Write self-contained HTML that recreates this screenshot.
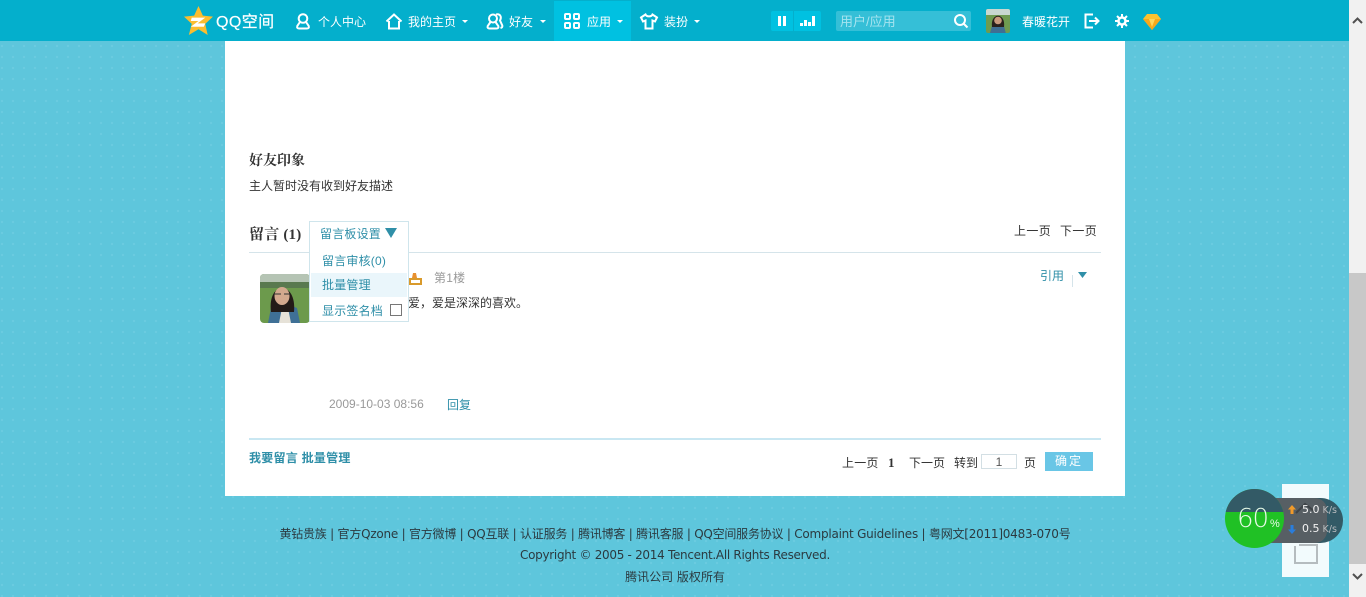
<!DOCTYPE html>
<html lang="zh"><head><meta charset="utf-8"><title>QQ空间</title>
<style>
html,body{margin:0;padding:0;width:1366px;height:597px;overflow:hidden}
body{position:relative;background-color:#5ec6dc;background-image:radial-gradient(circle at 2px 2px,#6bcbe0 1px,transparent 1.4px);background-size:11px 11px;font:12px "Liberation Sans","WenQuanYi Zen Hei","Noto Sans CJK SC",sans-serif;color:#333}
.a,.t{position:absolute;white-space:nowrap}
.t{line-height:16px}
.nav{color:#fff}
.b{color:#2f8fa8}
svg{position:absolute;overflow:visible}
.foot{left:225px;width:900px;text-align:center;color:#2b3a40;font-family:"DejaVu Sans","WenQuanYi Zen Hei","Noto Sans CJK SC",sans-serif;font-size:12px;letter-spacing:-.3px}
</style></head><body>
<!-- top bar -->
<div class="a" style="left:0;top:0;width:1349px;height:41px;background:#04afcc"></div>
<div class="a" style="left:554px;top:1px;width:77px;height:40px;background:#00c1e1"></div>
<!-- logo -->
<svg style="left:184px;top:6px" width="29" height="29" viewBox="0 0 30 30"><path d="M15 0l4.500 10 10.500 1-8 7.500L24.500 30 15 24l-10 6 3-11.500L0 11l10.500-1z" fill="#fbbd2f"/><path d="M8 12h14l-8 6h8l-1.500 3.500H7l8-6H7z" fill="#fff"/></svg>
<div class="t nav" style="left:216px;top:14px;font-size:16px;line-height:18px;letter-spacing:.4px;-webkit-text-stroke:.2px #fff">QQ空间</div>
<!-- nav icons -->
<svg style="left:295px;top:13px" width="16" height="17" fill="none" stroke="#fff" stroke-width="2"><circle cx="8" cy="5.500" r="4.300"/><path d="M5 9L2.300 13q-.8 2.500 2 2.500h7.400q2.800 0 2-2.500L11 9"/></svg>
<div class="t nav" style="left:318px;top:14px">个人中心</div>
<svg style="left:385px;top:13px" width="18" height="17" fill="none" stroke="#fff" stroke-width="2"><path d="M1.500 8.500L9 1.500l7.500 7M4 8v7.500h10V8"/></svg>
<div class="t nav" style="left:408px;top:14px">我的主页</div>
<svg style="left:461px;top:20px" width="8" height="4"><path d="M1 0h6L4 3z" fill="#fff"/></svg>
<svg style="left:486px;top:13px" width="18" height="17" fill="none" stroke="#fff" stroke-width="2"><circle cx="7" cy="5.500" r="4"/><path d="M4.500 9L1.700 13q-.7 2.500 2 2.500h6.600q2.700 0 2-2.500L9.500 9M10 1.500c4-1 6 2 4 6l2.300 5q.5 2-1.800 2.500"/></svg>
<div class="t nav" style="left:509px;top:14px">好友</div>
<svg style="left:539px;top:20px" width="8" height="4"><path d="M1 0h6L4 3z" fill="#fff"/></svg>
<svg style="left:564px;top:13px" width="16" height="16" fill="none" stroke="#fff" stroke-width="2"><rect x="1" y="1" width="5" height="5" rx="1"/><rect x="10" y="1" width="5" height="5" rx="1"/><rect x="1" y="10" width="5" height="5" rx="1"/><rect x="10" y="10" width="5" height="5" rx="1"/></svg>
<div class="t nav" style="left:587px;top:14px">应用</div>
<svg style="left:616px;top:20px" width="8" height="4"><path d="M1 0h6L4 3z" fill="#fff"/></svg>
<svg style="left:640px;top:13px" width="18" height="17" fill="none" stroke="#fff" stroke-width="2"><path d="M5.500 1.500L1 4.500l2 4 2.500-1V15.500h7V7.500l2.500 1 2-4-4.500-3c-1 2.500-6 2.500-7 0z"/></svg>
<div class="t nav" style="left:664px;top:14px">装扮</div>
<svg style="left:693px;top:20px" width="8" height="4"><path d="M1 0h6L4 3z" fill="#fff"/></svg>
<!-- play / stats -->
<div class="a" style="left:771px;top:11px;width:22px;height:20px;background:#00c1e1;border-radius:2px 0 0 2px"></div>
<div class="a" style="left:794px;top:11px;width:27px;height:20px;background:#00c1e1;border-radius:0 2px 2px 0"></div>
<svg style="left:778px;top:16px" width="8" height="10"><path d="M0 0h3v10H0zM5 0h3v10H5z" fill="#fff"/></svg>
<svg style="left:800px;top:16px" width="16" height="10"><path d="M0 7h3v3H0zM4 4h3v6H4zM8 6h3v4H8zM12 0h3v10h-3z" fill="#fff"/></svg>
<!-- search -->
<div class="a" style="left:836px;top:11px;width:135px;height:20px;background:#35bfd7;border-radius:2px"></div>
<div class="t" style="left:840px;top:14px;color:#a5e3ef;font-size:13px">用户/应用</div>
<svg style="left:953px;top:13px" width="16" height="16" fill="none" stroke="#fff" stroke-width="2"><circle cx="7" cy="7" r="5"/><path d="M11 11l3.500 3.500"/></svg>
<!-- avatar -->
<svg style="left:986px;top:9px;border-radius:2px;overflow:hidden" width="24" height="24" viewBox="0 0 24 24"><rect width="24" height="24" fill="#6e9b50"/><rect width="24" height="6" fill="#c8d8d0"/><path d="M4 24l2-7 6-2 6 2 2 8z" fill="#3f6f93"/><path d="M6 18C4 3 20 3 18 18z" fill="#2a211c"/><circle cx="12" cy="11.500" r="3.800" fill="#c99a7c"/></svg>
<div class="t nav" style="left:1022px;top:14px">春暖花开</div>
<svg style="left:1084px;top:13px" width="16" height="16" fill="none" stroke="#fff" stroke-width="2"><path d="M9 1.500H1.500v13H9M5 8h9M11 4.500L14.500 8 11 11.500"/></svg>
<svg style="left:1115px;top:14px" width="14" height="14" fill="none" stroke="#fff"><circle cx="7" cy="7" r="3.500" stroke-width="2.500"/><path d="M7 0v3M7 11v3M0 7h3M11 7h3M2 2l2 2M10 10l2 2M12 2l-2 2M2 12l2-2" stroke-width="2"/></svg>
<svg style="left:1143px;top:13px" width="18" height="17"><path d="M4 1h10l4 5-9 11L0 6z" fill="#fcc22e"/><path d="M0 6h18l-9 11z" fill="#f6a81c"/><path d="M6 6h6l-3 8z" fill="#ffd75a"/></svg>
<!-- main panel -->
<div class="a" style="left:225px;top:41px;width:900px;height:455px;background:#fff"></div>
<div class="t" style="left:249px;top:152px;font-size:14px;font-weight:bold;color:#333;font-family:'Noto Serif CJK SC',serif">好友印象</div>
<div class="t" style="left:249px;top:178px">主人暂时没有收到好友描述</div>
<div class="t" style="left:249px;top:227px;font-size:15px;font-weight:bold;letter-spacing:.2px;font-family:'Liberation Serif','Noto Serif CJK SC',serif">留言 (1)</div>
<div class="t" style="left:1014px;top:223px;letter-spacing:.35px">上一页</div>
<div class="t" style="left:1060px;top:223px;letter-spacing:.35px">下一页</div>
<div class="a" style="left:249px;top:252px;width:852px;height:1px;background:#d5e4ea"></div>
<!-- comment -->
<svg style="left:260px;top:274px;border-radius:4px;overflow:hidden" width="50" height="49" viewBox="0 0 50 49"><rect width="50" height="49" fill="#6c9a4c"/><rect width="50" height="8" fill="#b5c4b4"/><rect y="8" width="50" height="6" fill="#59794f"/><path d="M8 49l3-15 13-5 13 5 3 15z" fill="#3f7096"/><path d="M19 49l3-15h6l3 15z" fill="#e6e2d8"/><path d="M11 38C7 6 37 6 34 38z" fill="#231b18"/><ellipse cx="22" cy="22" rx="7.500" ry="9" fill="#d3a98e"/><path d="M14 20h7M24 20h6" stroke="#333" fill="none"/></svg>
<svg style="left:409px;top:273px" width="13" height="12"><path d="M4 0h3l1 5H3z" fill="#e89030"/><rect y="5" width="13" height="7" fill="#d99a2b"/><rect x="2" y="7" width="9" height="3" fill="#fff"/></svg>
<div class="t" style="left:434px;top:270px;color:#999;letter-spacing:.2px">第1楼</div>
<div class="t" style="left:408px;top:295px">爱，爱是深深的喜欢。</div>
<div class="t b" style="left:1040px;top:268px">引用</div>
<div class="a" style="left:1072px;top:275px;width:1px;height:12px;background:#d5e4ea"></div>
<svg style="left:1078px;top:272px" width="9" height="6"><path d="M0 0h9L4.500 6z" fill="#2f8fa8"/></svg>
<div class="t" style="left:329px;top:396px;color:#999">2009-10-03 08:56</div>
<div class="t b" style="left:447px;top:397px">回复</div>
<div class="a" style="left:249px;top:438px;width:852px;height:2px;background:#c9e7f2"></div>
<div class="t b" style="left:249px;top:450px;font-weight:bold;letter-spacing:.25px">我要留言 批量管理</div>
<div class="t" style="left:842px;top:455px;letter-spacing:.2px">上一页</div>
<div class="t" style="left:888px;top:455px;font-weight:bold;font-family:'Liberation Serif',serif;font-size:13px">1</div>
<div class="t" style="left:909px;top:455px">下一页</div>
<div class="t" style="left:954px;top:455px">转到</div>
<div class="a" style="left:981px;top:454px;width:34px;height:13px;border:1px solid #d3dfe4;text-align:center;font-size:12px;line-height:14px;color:#555">1</div>
<div class="t" style="left:1024px;top:455px">页</div>
<div class="a" style="left:1045px;top:452px;width:48px;height:19px;background:#69c6e6;color:#fff;text-align:center;line-height:19px;letter-spacing:2px">确定</div>
<!-- dropdown -->
<div class="a" style="left:309px;top:221px;width:98px;height:99px;background:#fff;border:1px solid #cfe5ec"></div>
<div class="t b" style="left:320px;top:226px;letter-spacing:.2px">留言板设置</div>
<svg style="left:385px;top:228px" width="12" height="10"><path d="M0 0h12L6 10z" fill="#2f8fa8"/></svg>
<div class="a" style="left:311px;top:273px;width:96px;height:24px;background:#eaf6fb"></div>
<div class="t b" style="left:322px;top:253px;letter-spacing:.2px">留言审核(0)</div>
<div class="t b" style="left:322px;top:277px;letter-spacing:.2px">批量管理</div>
<div class="t b" style="left:322px;top:303px;letter-spacing:.2px">显示签名档</div>
<div class="a" style="left:390px;top:304px;width:10px;height:10px;border:1px solid #777;background:#fff"></div>
<!-- footer -->
<div class="t foot" style="top:526px;letter-spacing:-.23px">黄钻贵族 | 官方Qzone | 官方微博 | QQ互联 | 认证服务 | 腾讯博客 | 腾讯客服 | QQ空间服务协议 | Complaint Guidelines | 粤网文[2011]0483-070号</div>
<div class="t foot" style="top:547px">Copyright © 2005 - 2014 Tencent.All Rights Reserved.</div>
<div class="t foot" style="top:569px;letter-spacing:0">腾讯公司 版权所有</div>
<!-- floating -->
<div class="a" style="left:1282px;top:484px;width:47px;height:93px;background:#f2fbfd"></div>
<svg style="left:1293px;top:543px" width="26" height="21" fill="none" stroke="#b5bcbf" stroke-width="2"><path d="M2 3v17h22V2H6"/></svg>
<div class="a" style="left:1270px;top:498px;width:73px;height:45px;border-radius:0 23px 23px 0;background:#335a66"></div>
<div class="a" style="left:1270px;top:498px;width:57px;height:45px;border-radius:0 12px 12px 0;background:rgba(90,95,100,.92)"></div>
<svg style="left:1294px;top:501px" width="24" height="13" fill="none" stroke="#3f4448" stroke-width="2"><path d="M2 12L11 3l9 7"/></svg>
<div class="a" style="left:1225px;top:489px;width:59px;height:59px;border-radius:50%;overflow:hidden;background:#20c125"><div style="height:23px;background:#335a66"></div></div>
<div class="t" style="left:1237px;top:504px;color:#e8fbe8;font-size:26px;line-height:30px;letter-spacing:-1px;font-family:'DejaVu Sans',sans-serif;font-weight:200">60</div>
<div class="t" style="left:1270px;top:518px;color:#e8fbe8;font-size:11px;line-height:12px">%</div>
<svg style="left:1288px;top:505px" width="8" height="9"><path d="M4 0l4 4.500H5.500V9h-3V4.500H0z" fill="#f09a2a"/></svg>
<svg style="left:1288px;top:525px" width="8" height="9"><path d="M4 9L0 4.500h2.500V0h3v4.500H8z" fill="#2a7ddb"/></svg>
<div class="t" style="left:1302px;top:502px;color:#f2f2f2;font-size:11px;font-family:'DejaVu Sans',sans-serif">5.0<span style="color:#b9bcbf;font-size:9.500px"> K/s</span></div>
<div class="t" style="left:1302px;top:521px;color:#f2f2f2;font-size:11px;font-family:'DejaVu Sans',sans-serif">0.5<span style="color:#b9bcbf;font-size:9.500px"> K/s</span></div>
<!-- scrollbar -->
<div class="a" style="left:1349px;top:0;width:17px;height:597px;background:#f1f1f1"></div>
<div class="a" style="left:1349px;top:273px;width:17px;height:291px;background:#c8c8c8"></div>
<svg style="left:1351px;top:16px" width="13" height="9" fill="none" stroke="#505050" stroke-width="2"><path d="M2 7l4.500-4.500L11 7"/></svg>
<svg style="left:1351px;top:572px" width="13" height="9" fill="none" stroke="#505050" stroke-width="2"><path d="M2 2l4.500 4.500L11 2"/></svg>
</body></html>
